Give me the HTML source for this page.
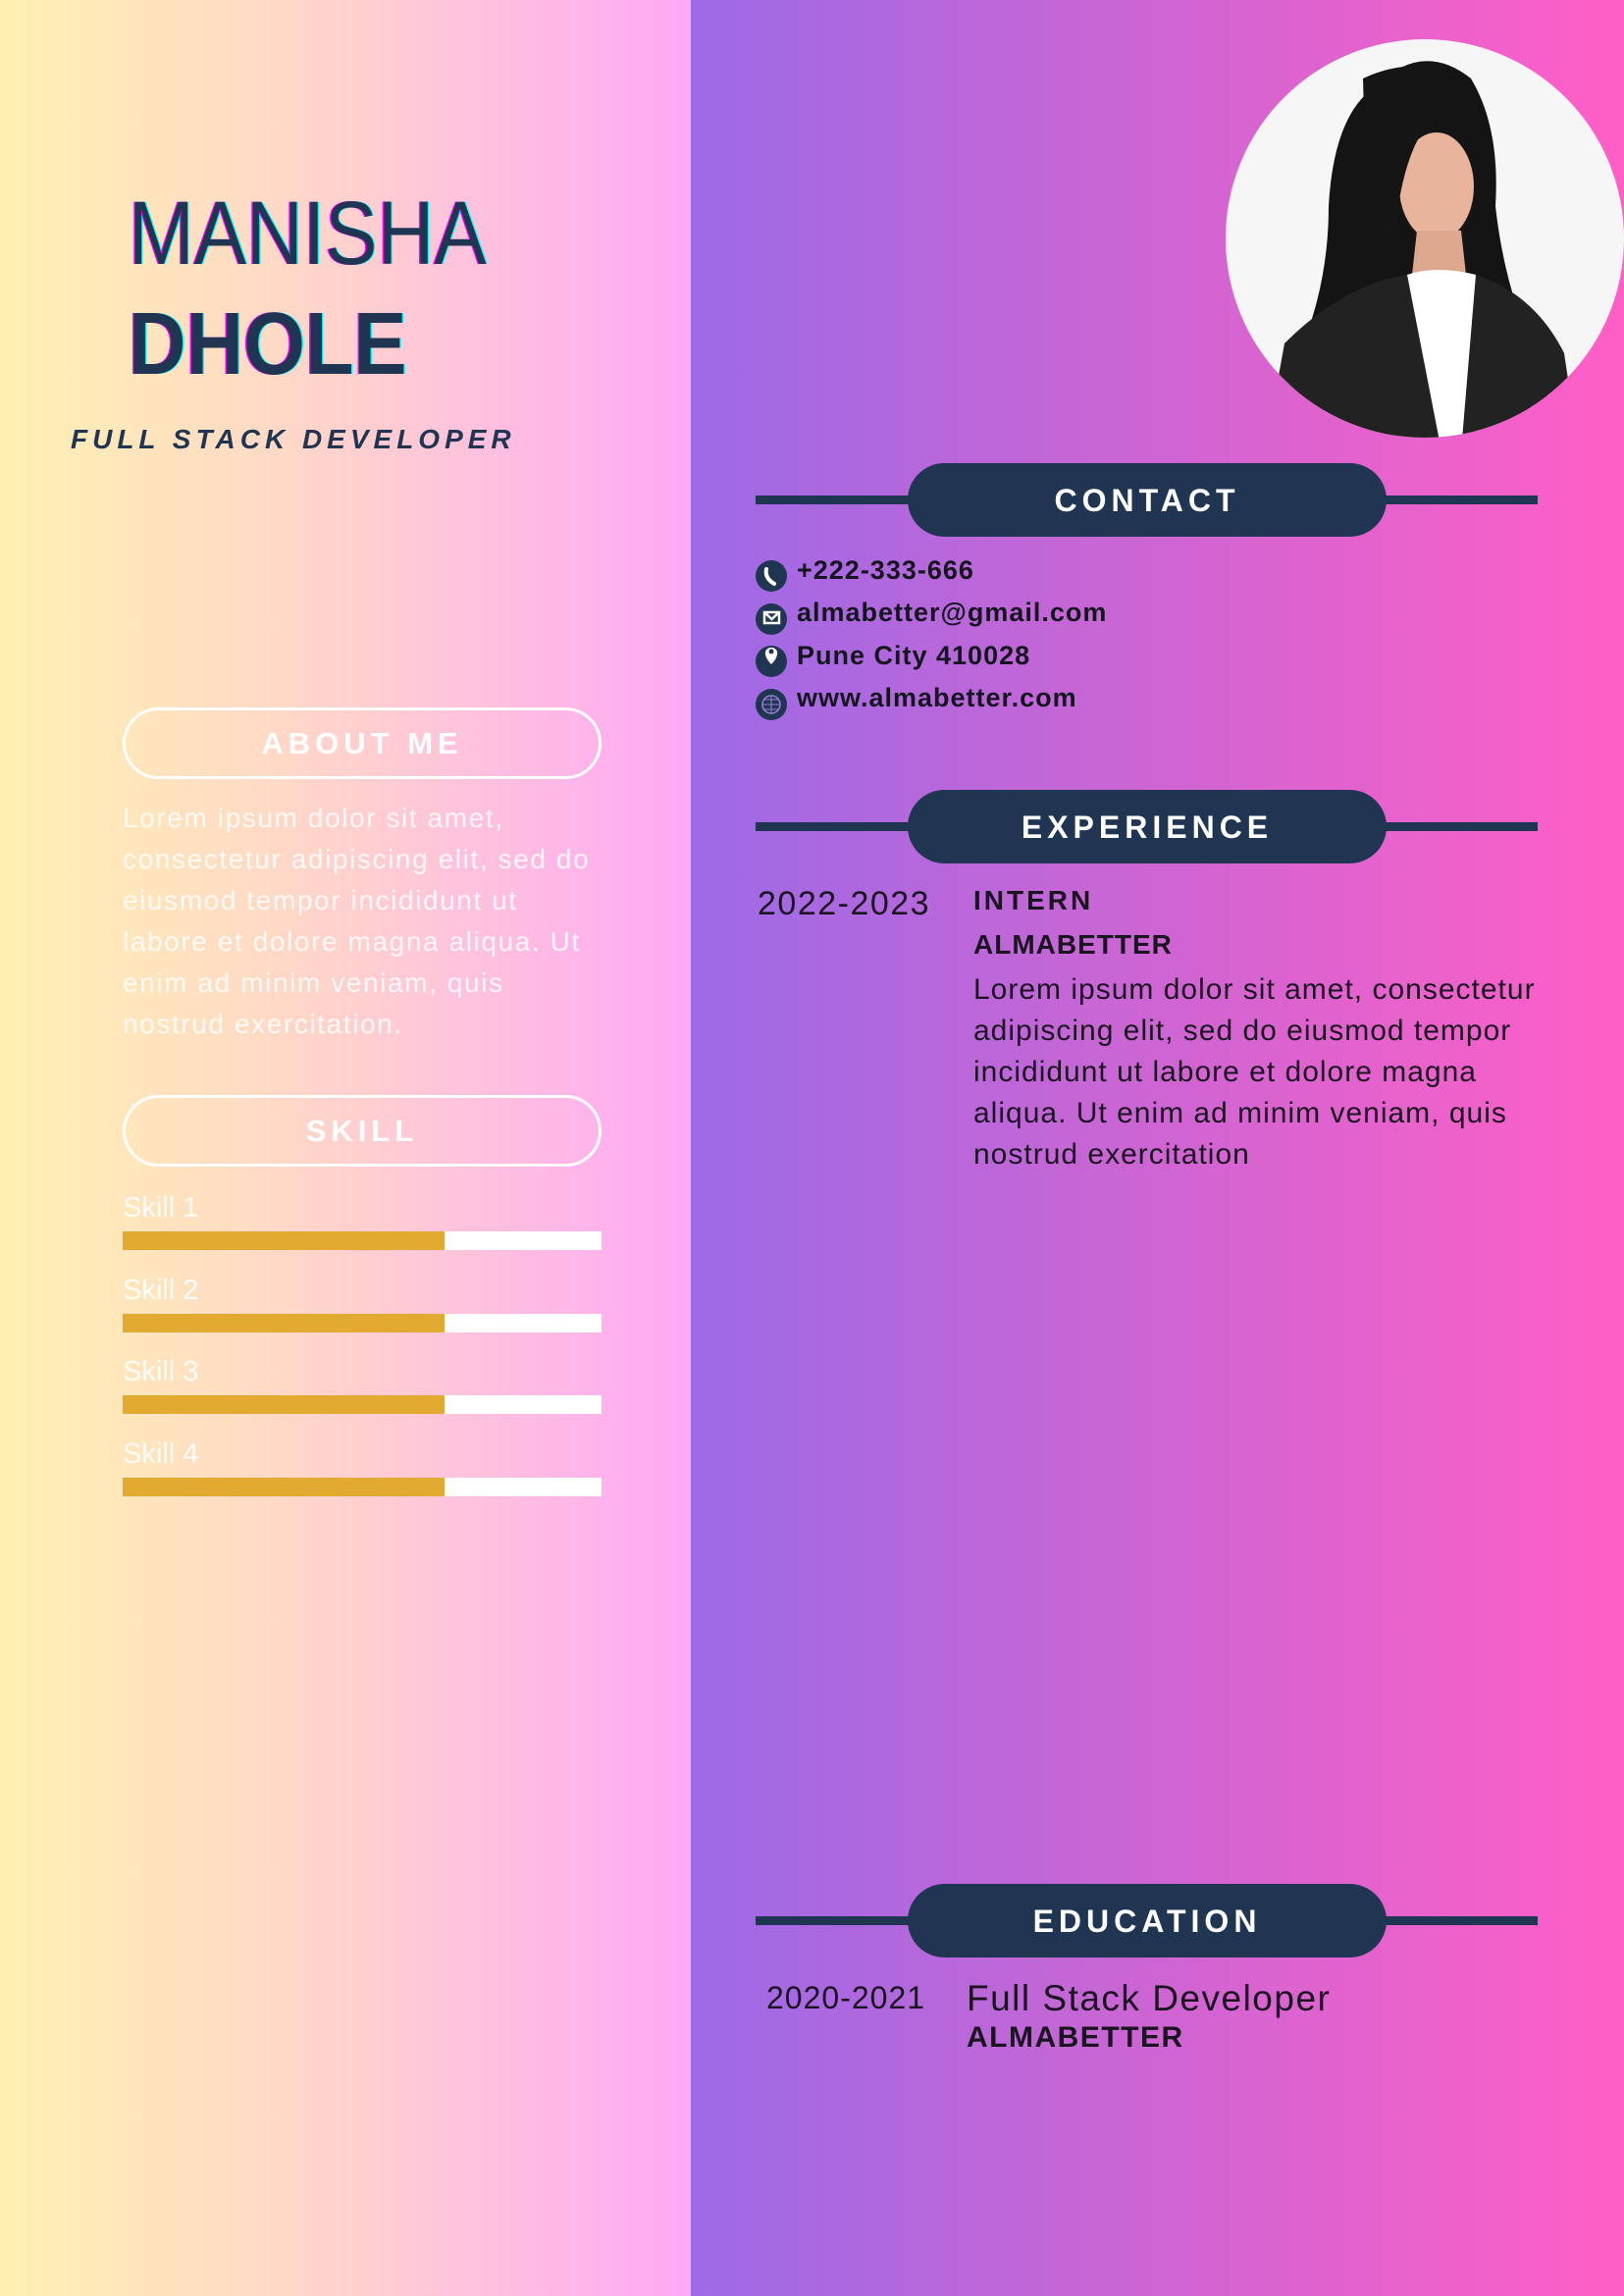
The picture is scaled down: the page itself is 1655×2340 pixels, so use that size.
<!DOCTYPE html>
<html><head><meta charset="utf-8"><style>
*{margin:0;padding:0;box-sizing:border-box}
body{width:1655px;height:2340px;position:relative;overflow:hidden;font-family:"Liberation Sans",sans-serif}
#left{position:absolute;left:0;top:0;width:704px;height:2340px;background:linear-gradient(90deg,#fff1b2 0%,#ffd9c6 40%,#ffa8f6 100%)}
#right{position:absolute;left:704px;top:0;width:951px;height:2340px;background:linear-gradient(90deg,#9c6ae6 0%,#c466d6 40%,#ff5fc6 100%)}
.abs{position:absolute}
.name{color:#1f3551;left:131px;white-space:nowrap;text-shadow:-1.5px 0 #f0f,1.5px 0 #0ff;transform-origin:0 0}
.pill{position:absolute;left:125px;width:488px;height:73px;border:3px solid #fff;border-radius:37px;color:#fff;font-weight:bold;font-size:31px;letter-spacing:5px;text-align:center;line-height:67px}
.about{position:absolute;left:125px;top:813px;white-space:nowrap;color:rgba(255,255,255,.85);font-size:28px;letter-spacing:1.6px;line-height:42px}
.sl{position:absolute;left:125px;color:rgba(255,255,255,.9);font-size:29px}
.bar{position:absolute;left:125px;width:488px;height:19px;background:#fff}
.bar i{display:block;width:328px;height:19px;background:#e2aa30}
.line{position:absolute;left:770px;width:797px;height:9px;background:#1f3551}
.hp{position:absolute;left:925px;width:488px;height:75px;background:#1f3551;border-radius:38px;color:#fff;font-weight:bold;font-size:32px;letter-spacing:5px;text-align:center;line-height:77px}
.ci{position:absolute;left:770px;width:32px;height:32px;border-radius:50%;background:#1f3551}
.ct{position:absolute;left:812px;font-weight:bold;font-size:27px;color:#15151f;letter-spacing:1px}
.dk{color:#1a1320}
</style></head><body>
<div id="left"></div><div id="right"></div>

<div class="abs name" style="top:186px;font-size:92px;transform:scaleX(.87)">MANISHA</div>
<div class="abs name" style="top:300px;font-size:90px;font-weight:bold;transform:scaleX(.9)">DHOLE</div>
<div class="abs" style="left:72px;top:432px;font-size:28px;font-weight:bold;font-style:italic;letter-spacing:5px;color:#1f3551">FULL STACK DEVELOPER</div>

<div class="pill" style="top:721px">ABOUT ME</div>
<div class="about">Lorem ipsum dolor sit amet,<br>consectetur adipiscing elit, sed do<br>eiusmod tempor incididunt ut<br>labore et dolore magna aliqua. Ut<br>enim ad minim veniam, quis<br>nostrud exercitation.</div>
<div class="pill" style="top:1116px">SKILL</div>

<div class="sl" style="top:1215px">Skill 1</div><div class="bar" style="top:1255px"><i></i></div>
<div class="sl" style="top:1299px">Skill 2</div><div class="bar" style="top:1339px"><i></i></div>
<div class="sl" style="top:1382px">Skill 3</div><div class="bar" style="top:1422px"><i></i></div>
<div class="sl" style="top:1466px">Skill 4</div><div class="bar" style="top:1506px"><i></i></div>

<svg class="abs" style="left:1249px;top:40px" width="406" height="406" viewBox="0 0 406 406">
<defs><clipPath id="c"><circle cx="203" cy="203" r="203"/></clipPath></defs>
<circle cx="203" cy="203" r="203" fill="#f6f6f6"/>
<g clip-path="url(#c)">
<path d="M150 50 Q200 0 250 40 Q280 90 275 170 Q285 260 320 330 L340 420 L60 420 L75 320 Q105 250 105 170 Q110 80 150 50Z" fill="#141414"/>
<ellipse cx="215" cy="150" rx="38" ry="55" fill="#e8b59c"/>
<path d="M140 40 Q215 5 262 70 Q235 70 205 88 Q180 120 172 200 L145 220Z" fill="#151515"/>
<path d="M195 195 L240 195 L245 240 L190 240Z" fill="#dea88f"/>
<path d="M185 240 Q215 230 255 240 L290 420 L170 420Z" fill="#fff"/>
<path d="M60 310 Q120 250 185 240 L220 420 L40 420Z M255 240 Q315 260 345 320 L360 420 L240 420Z" fill="#222"/>
</g></svg>

<div class="line" style="top:505px"></div><div class="hp" style="top:472px">CONTACT</div>
<div class="ci" style="top:571px"></div><div class="ct" style="top:566px">+222-333-666</div>
<div class="ci" style="top:615px"></div><div class="ct" style="top:609px">almabetter@gmail.com</div>
<div class="ci" style="top:658px"></div><div class="ct" style="top:653px">Pune City 410028</div>
<div class="ci" style="top:702px"></div><div class="ct" style="top:696px">www.almabetter.com</div>
<svg class="abs" style="left:770px;top:571px" width="32" height="163" viewBox="0 0 32 163" fill="none" stroke="#fff" stroke-width="2.5">
<path d="M11 9 Q9 18 19 24" stroke-width="4" stroke-linecap="round"/>
<rect x="9" y="53" width="15" height="11"/><path d="M9 53 L16.5 60 L24 53"/>
<path d="M16 106 Q9 99 10 93 A6.5 6.5 0 0 1 22 93 Q23 99 16 106Z" fill="#fff" stroke="none"/><circle cx="16" cy="93" r="2.5" fill="#1f3551" stroke="none"/>
<circle cx="16" cy="147" r="9" stroke-width="1.5" stroke="#9a7fd8"/><path d="M7 147 H25 M16 138 V156 M9 142 H23 M9 152 H23" stroke-width="1" stroke="#9a7fd8"/>
</svg>

<div class="line" style="top:838px"></div><div class="hp" style="top:805px">EXPERIENCE</div>
<div class="abs dk" style="left:772px;top:902px;font-size:34px;letter-spacing:1.5px">2022-2023</div>
<div class="abs dk" style="left:992px;top:902px;font-size:28px;font-weight:bold;letter-spacing:3px">INTERN</div>
<div class="abs dk" style="left:992px;top:947px;font-size:28px;font-weight:bold;letter-spacing:1px">ALMABETTER</div>
<div class="abs dk" style="left:992px;top:988px;white-space:nowrap;font-size:30px;letter-spacing:1px;line-height:42px">Lorem ipsum dolor sit amet, consectetur<br>adipiscing elit, sed do eiusmod tempor<br>incididunt ut labore et dolore magna<br>aliqua. Ut enim ad minim veniam, quis<br>nostrud exercitation</div>

<div class="line" style="top:1953px"></div><div class="hp" style="top:1920px">EDUCATION</div>
<div class="abs dk" style="left:781px;top:2018px;font-size:32px;letter-spacing:1px">2020-2021</div>
<div class="abs dk" style="left:985px;top:2016px;font-size:37px;letter-spacing:1.5px">Full Stack Developer</div>
<div class="abs dk" style="left:985px;top:2060px;font-size:30px;font-weight:bold;letter-spacing:1.5px">ALMABETTER</div>
</body></html>
